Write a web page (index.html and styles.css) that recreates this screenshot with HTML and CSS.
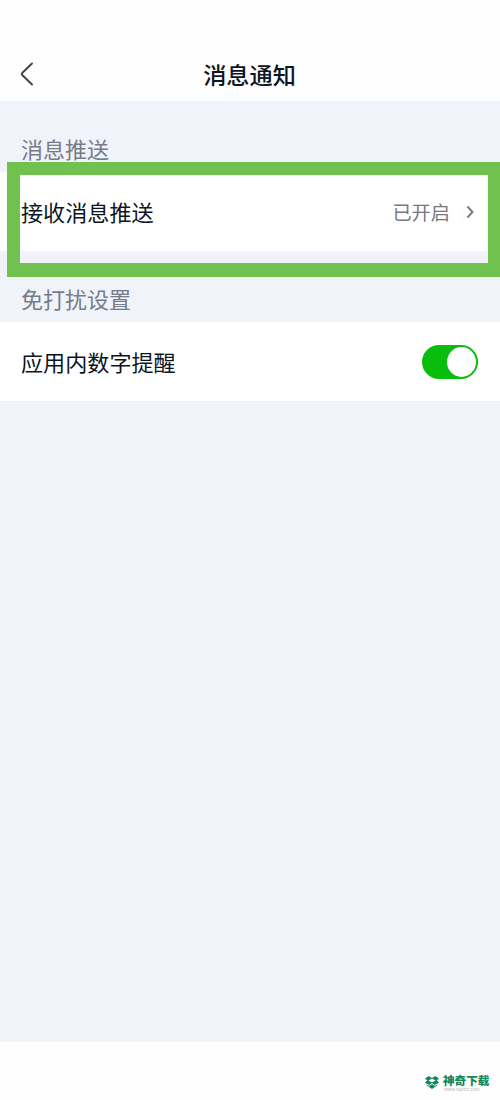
FILE: index.html
```html
<!DOCTYPE html>
<html lang="zh-CN">
<head>
<meta charset="utf-8">
<title>消息通知</title>
<link rel="stylesheet" href="styles.css">
</head>
<body>
<div class="screen">
  <header class="header">
    <svg class="back" viewBox="0 0 16 24"><path d="M13 1.5 L3.2 11 Q2.2 12 3.2 13 L13 22.5"/></svg>
    <h1 class="title">消息通知</h1>
  </header>
  <main class="content">
    <h2 class="section-label">消息推送</h2>
    <div class="row">
      <span class="row-name">接收消息推送</span>
      <span class="row-value">已开启</span>
      <svg class="chevron" viewBox="0 0 8 14"><path d="M1.5 1.5 L6.5 7 L1.5 12.5"/></svg>
    </div>
    <h2 class="section-label">免打扰设置</h2>
    <div class="row">
      <span class="row-name">应用内数字提醒</span>
      <span class="switch"><span class="knob"></span></span>
    </div>
    <div class="highlight"></div>
  </main>
  <footer class="footer">
    <svg class="logo" viewBox="0 0 14 13"><path d="M3.8 0 L7 2 L10.200 0 L14 2.500 L11.800 4.500 L14 6.500 L12.200 8 V9.500 L7 13 L1.800 9.500 V8 L0 6.500 L2.200 4.500 L0 2.500Z"/><path class="gap" d="M3.500 4.500 L7 2.600 L10.500 4.500 L7 6.600Z"/><path class="fold" d="M1.800 8.100 L4.300 9.500 L7 7.500 L9.700 9.500 L12.200 8.100"/></svg>
    <div class="brand"><span class="brand-name">神奇下载</span><span class="brand-url">www.sqxzz.com</span></div>
  </footer>
</div>
</body>
</html>
```
FILE: styles.css
```css
* { box-sizing: border-box; }
body { margin: 0; font-family: "Noto Sans CJK SC", sans-serif; background: #fff; }
.screen { width: 500px; height: 1100px; display: flex; flex-direction: column; overflow: hidden; }
.header { height: 101px; padding: 46px 20px 0 19px; display: grid; grid-template-columns: 16px 1fr 16px; align-items: center; background: #fefefe; }
.back { width: 16px; height: 24px; margin-top: 0; fill: none; stroke: #424248; stroke-width: 1.9; stroke-linecap: round; }
.title { margin: 0; text-align: center; font-size: 23.2px; font-weight: 500; line-height: 52px; color: #0c1524; }
.content { position: relative; flex: 1; background: #f0f3fa; }
.section-label { margin: 0; height: 71px; padding: 30px 21px 0; font-size: 22px; line-height: 34px; font-weight: 400; color: #777b88; }
.row { height: 79px; padding: 0 22px 0 21px; display: flex; align-items: center; background: #fff; color: #0c1524; font-size: 22.1px; }
.row-name { flex: 1; padding-bottom: 2px; }
.row-value { font-size: 19.2px; color: #77777f; }
.chevron { width: 8px; height: 14px; margin: 0 4px 0 16px; fill: none; stroke: #77777f; stroke-width: 1.9; }
.switch { width: 56px; height: 34px; padding: 2px; border-radius: 17px; display: flex; justify-content: flex-end; background: #08bd0b; }
.knob { width: 29px; height: 30px; border-radius: 50%; background: #fff; }
.highlight { position: absolute; left: 7px; top: 61px; width: 494px; height: 115px; border: 13px solid #71c14e; border-bottom-width: 14px; }
.footer { height: 58px; padding: 33px 10px 0 0; display: flex; justify-content: flex-end; gap: 4px; background: #fefefe; }
.logo { width: 14px; height: 13px; margin-top: 1px; fill: #14885a; }
.logo .gap { fill: #fff; }
.logo .fold { fill: none; stroke: #fff; stroke-width: 1; }
.brand { display: flex; flex-direction: column; gap: 1px; width: 47px; }
.brand-name { font-size: 11.6px; font-weight: 900; line-height: 11px; color: #14885a; white-space: nowrap; }
.brand-url { padding-left: 1px; font: 5px/5px "Liberation Sans", sans-serif; color: #bbb; }
```
